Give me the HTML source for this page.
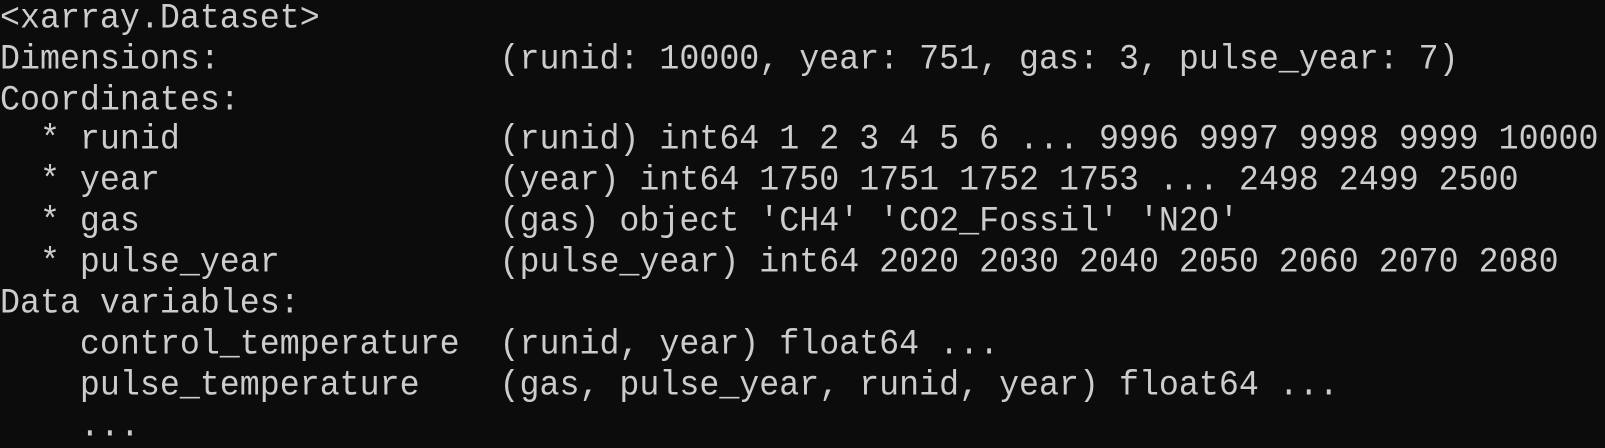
<!DOCTYPE html>
<html><head><meta charset="utf-8"><style>
html,body{margin:0;padding:0;background:#0c0c0c;width:1605px;height:421px;overflow:hidden}
div{position:absolute;left:0;height:40px;margin:0;font-family:"Liberation Mono",monospace;font-size:33.3px;line-height:38px;color:#cccccc;white-space:pre;transform-origin:0 0;transform:scaleY(1.05)}
</style></head><body>
<div style="top:-2px">&lt;xarray.Dataset&gt;</div>
<div style="top:39px">Dimensions:              (runid: 10000, year: 751, gas: 3, pulse_year: 7)</div>
<div style="top:80px">Coordinates:</div>
<div style="top:119px">  * runid                (runid) int64 1 2 3 4 5 6 ... 9996 9997 9998 9999 10000</div>
<div style="top:160px">  * year                 (year) int64 1750 1751 1752 1753 ... 2498 2499 2500</div>
<div style="top:201px">  * gas                  (gas) object 'CH4' 'CO2_Fossil' 'N2O'</div>
<div style="top:242px">  * pulse_year           (pulse_year) int64 2020 2030 2040 2050 2060 2070 2080</div>
<div style="top:283px">Data variables:</div>
<div style="top:324px">    control_temperature  (runid, year) float64 ...</div>
<div style="top:365px">    pulse_temperature    (gas, pulse_year, runid, year) float64 ...</div>
<div style="top:406px">    ...</div>
</body></html>
